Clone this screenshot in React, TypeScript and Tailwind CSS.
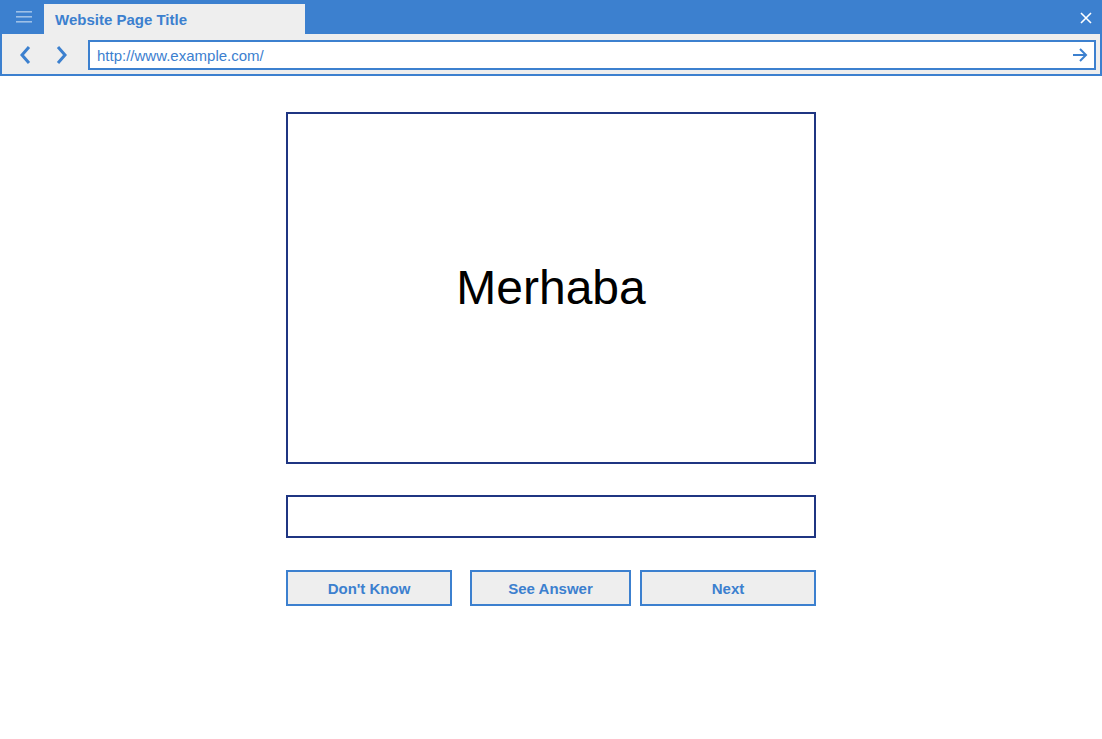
import React from "react";

const F = { fontFamily: '"Liberation Sans", Arial, sans-serif' };

export default function App() {
  return (
    <div className="w-[1102px] h-[739px] bg-white" style={F}>
      <div className="border-x-2 border-b-2 border-[#3c80cf]">
        <div className="h-[34px] bg-[#3c80cf] flex items-end relative">
          <div className="w-[42px] h-[34px] flex items-center justify-center">
            <svg width="18" height="14" viewBox="0 0 18 14" className="ml-[2px] -mt-[1px]">
              <rect x="1" y="1" width="16" height="1.6" fill="#ffffff" fillOpacity="0.5" />
              <rect x="1" y="6" width="16" height="1.6" fill="#ffffff" fillOpacity="0.5" />
              <rect x="1" y="11" width="16" height="1.6" fill="#ffffff" fillOpacity="0.5" />
            </svg>
          </div>
          <div className="w-[261px] h-[30px] bg-[#eeeeee] flex items-center pl-[11px] pt-[2px] text-[15px] font-bold text-[#3c80cf]">
            Website Page Title
          </div>
          <div className="flex-1" />
          <div className="absolute right-[7px] top-[11px]">
            <svg width="14" height="14" viewBox="0 0 14 14">
              <path d="M2 2 L12 12 M12 2 L2 12" stroke="#ffffff" strokeWidth="1.6" />
            </svg>
          </div>
        </div>
        <div className="h-[40px] bg-[#eeeeee] flex items-start pt-[6px]">
          <div className="w-[86px] h-[30px] flex items-center pl-[16px] gap-[23px]">
            <svg width="14" height="20" viewBox="0 0 14 20">
              <path d="M11 2 L4 10 L11 18" stroke="#3c80cf" strokeWidth="3" fill="none" />
            </svg>
            <svg width="14" height="20" viewBox="0 0 14 20">
              <path d="M3 2 L10 10 L3 18" stroke="#3c80cf" strokeWidth="3" fill="none" />
            </svg>
          </div>
          <div className="w-[1008px] h-[30px] border-2 border-[#3c80cf] bg-white flex items-center pl-[7px] pr-[6px] pt-[2px]">
            <span className="flex-1 text-[15px] text-[#3c80cf]">http://www.example.com/</span>
            <svg width="16" height="16" viewBox="0 0 16 16" className="-mt-[3px]">
              <path d="M1 8 H14 M8 2 L14 8 L8 14" stroke="#3c80cf" strokeWidth="2" fill="none" />
            </svg>
          </div>
        </div>
      </div>
      <div className="flex flex-col items-center pt-[36px]">
        <div className="w-[530px] h-[352px] border-2 border-[#1f3582] flex items-center justify-center">
          <span className="text-[48px] text-black">Merhaba</span>
        </div>
        <div className="w-[530px] h-[43px] border-2 border-[#1f3582] mt-[31px]" />
        <div className="w-[530px] flex mt-[32px]">
          <button className="w-[166px] h-[36px] pt-[2px] border-2 border-[#3c80cf] bg-[#eeeeee] text-[15px] font-bold text-[#3c80cf]">
            Don't Know
          </button>
          <button className="w-[161px] h-[36px] pt-[2px] ml-[18px] border-2 border-[#3c80cf] bg-[#eeeeee] text-[15px] font-bold text-[#3c80cf]">
            See Answer
          </button>
          <button className="w-[176px] h-[36px] pt-[2px] ml-[9px] border-2 border-[#3c80cf] bg-[#eeeeee] text-[15px] font-bold text-[#3c80cf]">
            Next
          </button>
        </div>
      </div>
    </div>
  );
}
